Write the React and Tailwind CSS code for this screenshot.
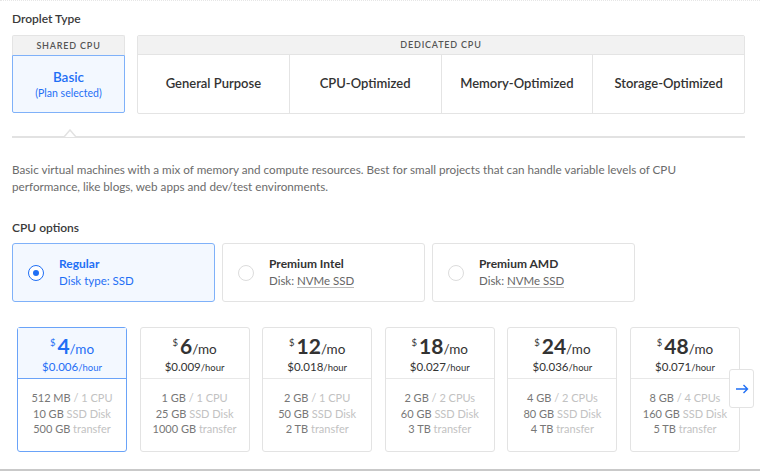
const font = { fontFamily: 'Lato, "Liberation Sans", sans-serif' }

const dedicated = ['General Purpose', 'CPU-Optimized', 'Memory-Optimized', 'Storage-Optimized']

const cpuOptions = [
  { name: 'Regular', disk: 'Disk type: SSD', selected: true },
  { name: 'Premium Intel', disk: 'NVMe SSD' },
  { name: 'Premium AMD', disk: 'NVMe SSD' },
]

const plans = [
  { price: '4', hour: '0.006', mem: '512 MB', cpu: '1 CPU', disk: '10 GB', transfer: '500 GB', selected: true },
  { price: '6', hour: '0.009', mem: '1 GB', cpu: '1 CPU', disk: '25 GB', transfer: '1000 GB' },
  { price: '12', hour: '0.018', mem: '2 GB', cpu: '1 CPU', disk: '50 GB', transfer: '2 TB' },
  { price: '18', hour: '0.027', mem: '2 GB', cpu: '2 CPUs', disk: '60 GB', transfer: '3 TB' },
  { price: '24', hour: '0.036', mem: '4 GB', cpu: '2 CPUs', disk: '80 GB', transfer: '4 TB' },
  { price: '48', hour: '0.071', mem: '8 GB', cpu: '4 CPUs', disk: '160 GB', transfer: '5 TB' },
]

function CpuCard({ opt }) {
  const sel = opt.selected
  return (
    <div className={`w-[203px] h-[59px] rounded-[3px] border flex items-center ${
      sel ? 'border-[#7fb1f9] bg-[#f3f8ff]' : 'border-[#e3e3e3] bg-white'
    }`}>
      <div className="w-[46px] flex justify-center">
        {sel ? (
          <span className="w-[16px] h-[16px] rounded-full border border-[#1f6ff5] bg-white flex items-center justify-center">
            <span className="w-[6px] h-[6px] rounded-full bg-[#1f6ff5]" />
          </span>
        ) : (
          <span className="w-[16px] h-[16px] rounded-full border border-[#dcdcdc] bg-white" />
        )}
      </div>
      <div>
        <div className={`text-[12px] font-bold leading-[16px] ${sel ? 'text-[#1f6ff5]' : 'text-[#333]'}`}>{opt.name}</div>
        {sel ? (
          <div className="text-[11.5px] leading-[17px] text-[#1f6ff5]">{opt.disk}</div>
        ) : (
          <div className="text-[11.5px] leading-[17px] text-[#666]">
            Disk: <span className="border-b border-[#bbb]">{opt.disk}</span>
          </div>
        )}
      </div>
    </div>
  )
}

function PlanCard({ p }) {
  const sel = p.selected
  return (
    <div className={`w-[110px] h-[125px] shrink-0 rounded-[3px] border flex flex-col ${
      sel ? 'border-[#6aa3f8]' : 'border-[#e3e3e3]'
    }`}>
      <div className={`h-[51px] border-b flex flex-col items-center justify-center pt-[2px] ${
        sel ? 'bg-[#f3f8ff] border-[#6aa3f8] text-[#1f6ff5]' : 'border-[#e8e8e8] text-[#333]'
      }`}>
        <div className="flex items-baseline leading-none">
          <span className="text-[9.5px] relative -top-[8px] mr-[2px]">$</span>
          <span className="text-[21px] font-bold">{p.price}</span>
          <span className="text-[13.5px]">/mo</span>
        </div>
        <div className="leading-none mt-[1px]">
          <span className="text-[11.5px]">${p.hour}</span>
          <span className="text-[9.5px]">/hour</span>
        </div>
      </div>
      <div className="flex-1 pt-[11px] text-[11px] leading-[15.5px] text-center text-[#777]">
        <div>{p.mem} <span className="text-[#c2c2c2]">/ {p.cpu}</span></div>
        <div>{p.disk} <span className="text-[#c2c2c2]">SSD Disk</span></div>
        <div>{p.transfer} <span className="text-[#c2c2c2]">transfer</span></div>
      </div>
    </div>
  )
}

export default function App() {
  return (
    <div className="w-[760px] h-[476px] bg-white overflow-hidden relative border-t border-dotted border-[#e6e6e6]" style={font}>
      <div className="pl-[12px] pr-[15px]">
        <div className="pt-[10px] text-[12px] font-semibold text-[#3a3a3a] leading-[16px]">Droplet Type</div>

        {/* plan type tabs */}
        <div className="mt-[8px] flex gap-[12px]">
          <div className="w-[113px] flex flex-col">
            <div className="h-[20px] bg-[#f2f2f2] border border-[#e4e4e4] border-b-0 rounded-t-[2px] flex items-center justify-center text-[9px] tracking-[0.09em] font-semibold text-[#555]">
              SHARED CPU
            </div>
            <div className="h-[58px] border border-[#7fb1f9] bg-[#f3f8ff] rounded-b-[2px] flex flex-col items-center justify-center text-[#1f6ff5]">
              <div className="text-[13.5px] font-semibold leading-[18px]">Basic</div>
              <div className="text-[10.5px] leading-[14px]">(Plan selected)</div>
            </div>
          </div>
          <div className="flex-1 flex flex-col border border-[#e4e4e4] rounded-[2px]">
            <div className="h-[19px] bg-[#f2f2f2] border-b border-[#e4e4e4] flex items-center justify-center text-[9px] tracking-[0.09em] font-semibold text-[#555]">
              DEDICATED CPU
            </div>
            <div className="h-[58px] flex">
              {dedicated.map((d, i) => (
                <div key={d} className={`flex-1 flex items-center justify-center text-[13px] font-semibold text-[#333] ${i > 0 ? 'border-l border-[#e4e4e4]' : ''}`}>
                  {d}
                </div>
              ))}
            </div>
          </div>
        </div>

        {/* underline with caret */}
        <div className="mt-[17px] relative h-[7px]">
          <div className="absolute left-0 right-0 bottom-0 h-[2px] bg-[#e2e2e2]" />
          <svg className="absolute left-[48px] bottom-0" width="20" height="9" viewBox="0 0 20 9">
            <path d="M0 8 L4 8 L10 1 L16 8 L20 8" fill="white" stroke="#e2e2e2" strokeWidth="1.5" />
          </svg>
        </div>

        <p className="mt-[23px] text-[11.7px] leading-[17px] text-[#6b6b6b]">
          Basic virtual machines with a mix of memory and compute resources. Best for small projects that can handle variable levels of CPU performance, like blogs, web apps and dev/test environments.
        </p>

        <div className="mt-[25px] text-[12px] font-semibold text-[#3a3a3a] leading-[16px]">CPU options</div>
        <div className="mt-[7px] flex gap-[7px]">
          {cpuOptions.map(o => <CpuCard key={o.name} opt={o} />)}
        </div>
      </div>

      {/* plan cards */}
      <div className="mt-[25px] pl-[17px] flex gap-[12.6px]">
        {plans.map(p => <PlanCard key={p.price} p={p} />)}
      </div>

      <button className="absolute left-[729px] top-[368px] w-[25px] h-[39px] bg-white border border-[#e3e3e3] rounded-[3px] flex items-center justify-center text-[#1f6ff5]">
        <svg width="14" height="10" viewBox="0 0 14 10" fill="none" stroke="currentColor" strokeWidth="1.4">
          <path d="M1 5 H12.5 M8.5 1 L12.5 5 L8.5 9" />
        </svg>
      </button>

      <div className="absolute left-0 right-0 top-[468px] h-[2px] bg-[#c9c9c9]" />
    </div>
  )
}
